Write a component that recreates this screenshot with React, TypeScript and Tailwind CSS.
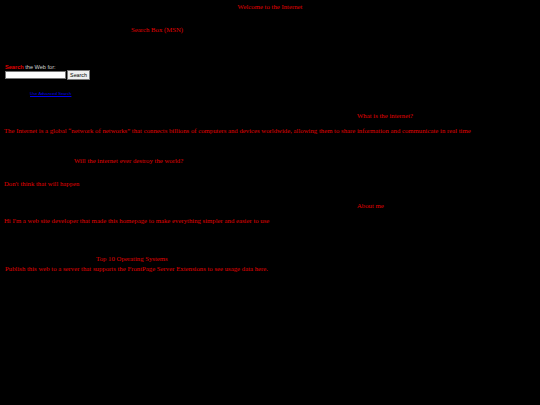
import React from "react";

export default function App() {
  return (
    <div
      className="w-[540px] h-[405px] bg-black flex flex-col overflow-hidden text-[#e00000] text-[6.75px] leading-[8px] whitespace-nowrap font-['Liberation_Serif',serif]"
    >
      <div className="mt-[3px] text-center">Welcome to the Internet</div>
      <div className="mt-[15px] pl-[131px]">Search Box (MSN)</div>
      <div className="mt-[30px] pl-[5px] h-[6px] leading-[6px] text-[5.6px] font-['Liberation_Sans',sans-serif] text-[#d0d0d0]">
        <span className="text-[#e00000] font-bold">Search</span> the Web for:
      </div>
      <div className="pl-[5px] flex items-center h-[10px]">
        <div className="w-[61px] h-[8px] bg-white border border-[#767676]" />
        <div className="ml-[1px] w-[23px] h-[10px] bg-[#efefef] border border-[#767676] text-black text-[5.3px] leading-[8px] text-center font-['Liberation_Sans',sans-serif]">
          Search
        </div>
      </div>
      <div className="mt-[10px] pl-[30px] text-[4.2px] font-['Liberation_Sans',sans-serif]">
        <a className="text-[#0000ee] underline">Use Advanced Search</a>
      </div>
      <div className="mt-[14px] pl-[357px]">What is the internet?</div>
      <div className="mt-[7px] pl-[4px]">
        The Internet is a global “network of networks” that connects billions of computers and devices worldwide, allowing them to share information and communicate in real time
      </div>
      <div className="mt-[22px] pl-[74px]">Will the internet ever destroy the world?</div>
      <div className="mt-[15px] pl-[4px]">Don't think that will happen</div>
      <div className="mt-[14px] pl-[357px]">About me</div>
      <div className="mt-[7px] pl-[4px]">Hi I'm a web site developer that made this homepage to make everything simpler and easier to use</div>
      <div className="mt-[30px] pl-[96px]">Top 10 Operating Systems</div>
      <div className="mt-[2px] pl-[5px]">Publish this web to a server that supports the FrontPage Server Extensions to see usage data here.</div>
    </div>
  );
}
